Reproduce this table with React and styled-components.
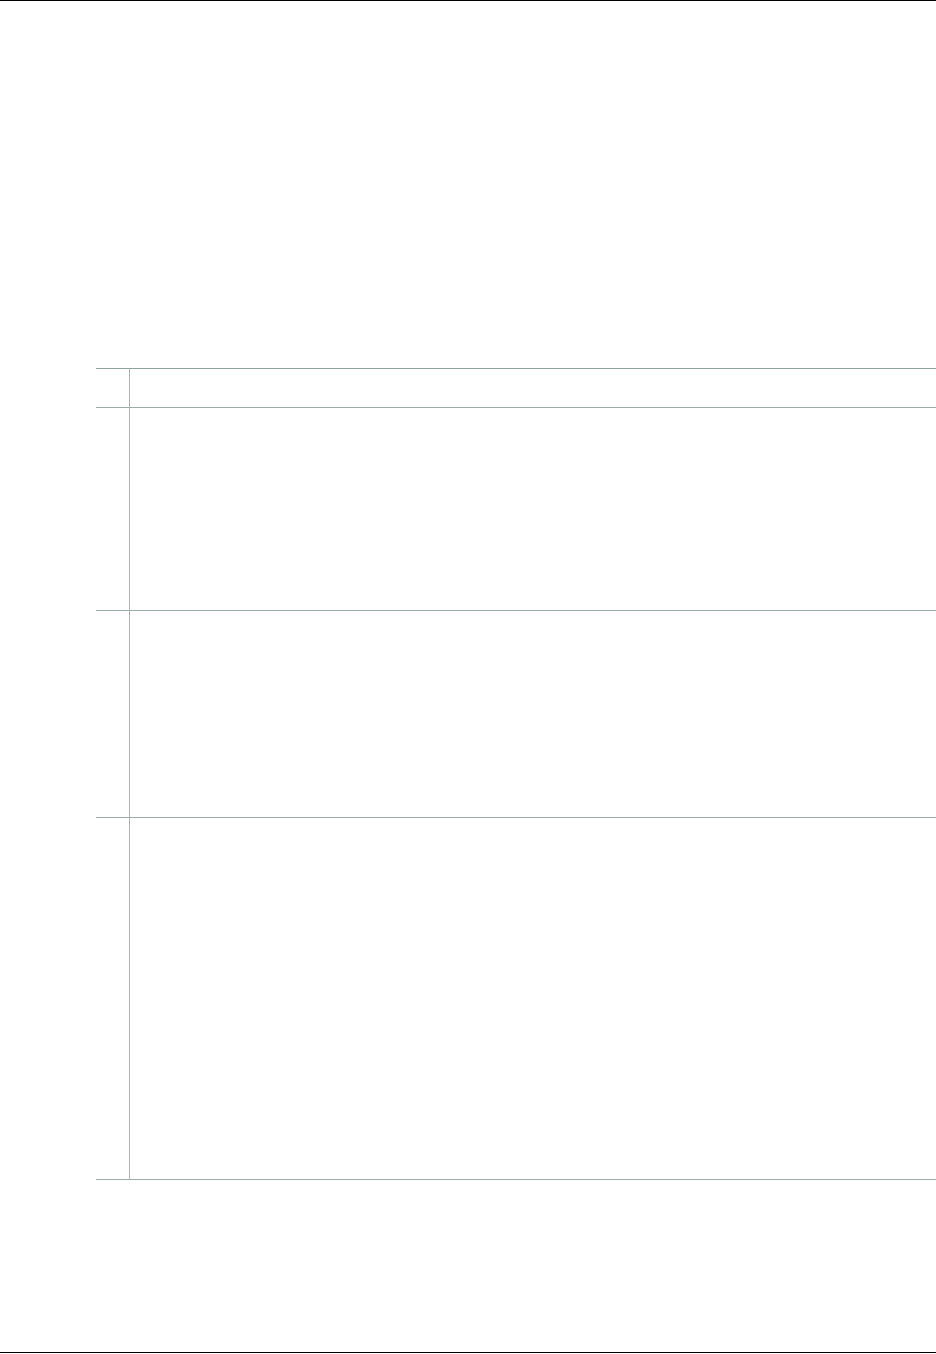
import React from "react";
import styled, { createGlobalStyle } from "styled-components";

const Global = createGlobalStyle`
  html, body { margin: 0; padding: 0; background: #ffffff; }
  body { font-family: "Liberation Sans", Arial, sans-serif; overflow: hidden; }
`;

const Page = styled.div`
  width: 936px;
  height: 1354px;
  display: flex;
  flex-direction: column;
  background: #ffffff;
`;

const Rule = styled.div`
  height: 1px;
  background: #000000;
  flex: none;
  margin-top: ${(p) => (p.$bottom ? "auto" : "0")};
  margin-bottom: ${(p) => (p.$bottom ? "1px" : "0")};
`;

const Table = styled.div`
  margin: 367px 0 0 96px;
  display: flex;
  flex-direction: column;
  border-top: 1px solid #8fa39a;
`;

const Row = styled.div`
  display: grid;
  grid-template-columns: 34px 1fr;
  height: ${(p) => p.$h}px;
  border-bottom: 1px solid #9eaca6;
`;

const IndexCell = styled.div`
  border-right: 1px solid #abb4b0;
`;

const BodyCell = styled.div``;

const rows = [38, 202, 206, 361];

export default function App() {
  return (
    <Page>
      <Global />
      <Rule />
      <Table>
        {rows.map((h, i) => (
          <Row key={i} $h={h}>
            <IndexCell />
            <BodyCell />
          </Row>
        ))}
      </Table>
      <Rule $bottom />
    </Page>
  );
}
